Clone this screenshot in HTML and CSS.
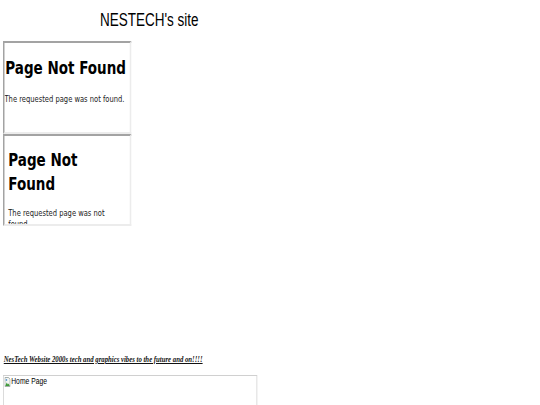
FILE: index.html
```html
<!DOCTYPE html>
<html>
<head>
<meta charset="utf-8">
<link rel="stylesheet" href="styles.css">
</head>
<body>
<div class="page">
  <h1 class="site-title">NESTECH's site</h1>
  <div class="frames">
    <div class="frame frame-a">
      <h2 class="nf-title">Page Not Found</h2>
      <p class="nf-text">The requested page was not found.</p>
    </div>
    <div class="frame frame-b">
      <h2 class="nf-title">Page Not Found</h2>
      <p class="nf-text">The requested page was not found.</p>
    </div>
  </div>
  <p class="tagline"><a href="#">NesTech Website 2000s tech and graphics vibes to the future and on!!!!</a></p>
  <div class="img-box">
    <span class="broken"><svg class="broken-icon" width="8" height="10" viewBox="0 0 8 10"><path d="M0.5 0.5 H5.5 L7.5 2.5 V9.5 H0.5 Z" fill="#f4f6f4" stroke="#9aa4a0"/><path d="M1 9 L3 5.5 L4.5 7.5 L5.5 6.5 L7 9 Z" fill="#3f9a3a"/><circle cx="2.6" cy="3" r="1.1" fill="#5b9bd5"/></svg>Home Page</span>
  </div>
</div>
</body>
</html>
```

FILE: styles.css
```css
html, body {
  margin: 0;
  padding: 0;
  background: #fff;
  overflow: hidden;
}
.page {
  transform: scaleX(0.75);
  transform-origin: 0 0;
  display: flex;
  flex-direction: column;
  align-items: flex-start;
  padding-left: 4px;
  box-sizing: border-box;
}
.site-title {
  width: 390px;
  margin: 10px 0 0 0;
  text-align: center;
  font-family: "Liberation Sans", Arial, sans-serif;
  font-weight: normal;
  font-size: 18px;
  line-height: 21px;
  color: #000;
}
.frames {
  margin-top: 10px;
  display: flex;
  flex-direction: column;
}
.frame {
  box-sizing: border-box;
  width: 171px;
  border-style: solid;
  border-width: 2px;
  border-top-color: #a3a3a3;
  border-left-color: #a3a3a3;
  border-right-color: #ececec;
  border-bottom-color: #ececec;
  overflow: hidden;
  font-family: "DejaVu Sans", Verdana, sans-serif;
  color: #111;
}
.nf-title {
  margin: 0;
  font-size: 18px;
  line-height: 24px;
  font-weight: bold;
  color: #000;
}
.nf-text {
  margin: 0;
  font-size: 9px;
  line-height: 11px;
  color: #222;
}
.frame-a {
  height: 93px;
  padding: 0;
}
.frame-a .nf-title {
  margin-top: 13px;
  margin-left: 1px;
}
.frame-a .nf-text {
  margin-top: 14px;
}
.frame-b {
  height: 92px;
  padding: 0 5px;
}
.frame-b .nf-title {
  margin-top: 12px;
}
.frame-b .nf-text {
  margin-top: 12px;
}
.tagline {
  margin: 128px 0 0 1px;
  font-family: "Liberation Serif", "Times New Roman", serif;
  font-style: italic;
  font-weight: bold;
  font-size: 9px;
  line-height: 11px;
}
.tagline a {
  color: #111;
  text-decoration: underline;
}
.img-box {
  margin-top: 10px;
  box-sizing: border-box;
  width: 339px;
  height: 40px;
  border: 1px solid #d0d0d0;
  font-family: "Liberation Sans", Arial, sans-serif;
  font-size: 9px;
  line-height: 11px;
  color: #000;
}
.broken {
  display: flex;
  align-items: flex-start;
  gap: 1px;
  margin: 0 0 0 1px;
}
.broken-icon {
  margin-top: 1px;
}
```
